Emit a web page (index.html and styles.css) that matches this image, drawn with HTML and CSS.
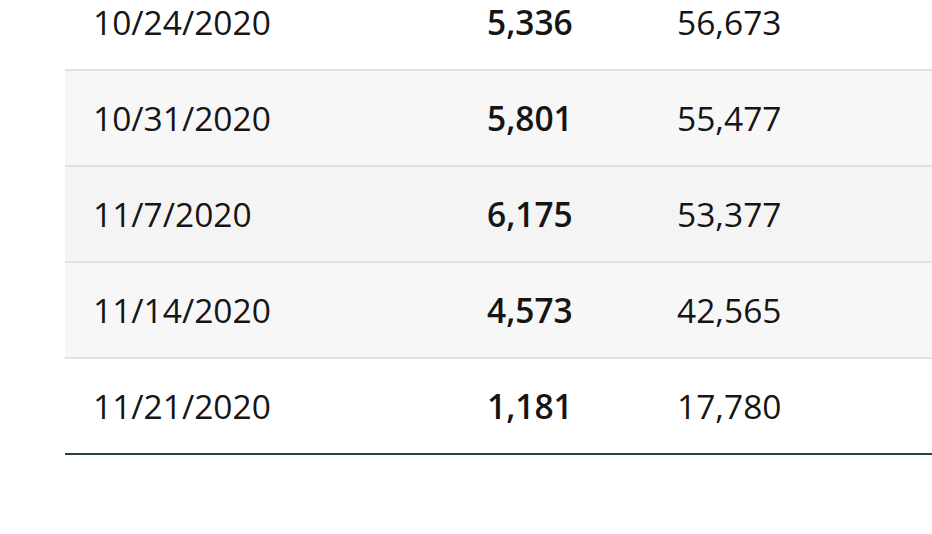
FILE: index.html
```html
<!DOCTYPE html>
<html lang="en">
<head>
<meta charset="utf-8">
<title>Weekly data</title>
<link rel="stylesheet" href="styles.css">
</head>
<body>
<div class="wrap">
  <table class="data">
    <tbody>
      <tr class="first"><td>10/24/2020</td><td class="num">5,336</td><td>56,673</td></tr>
      <tr class="shade"><td>10/31/2020</td><td class="num">5,801</td><td>55,477</td></tr>
      <tr class="shade dark"><td>11/7/2020</td><td class="num">6,175</td><td>53,377</td></tr>
      <tr class="shade"><td>11/14/2020</td><td class="num">4,573</td><td>42,565</td></tr>
      <tr class="last"><td>11/21/2020</td><td class="num">1,181</td><td>17,780</td></tr>
    </tbody>
  </table>
</div>
</body>
</html>
```

FILE: styles.css
```css
html, body {
  margin: 0;
  padding: 0;
  background: #ffffff;
  overflow: hidden;
}
body {
  font-family: "Open Sans", "Liberation Sans", sans-serif;
  color: #151515;
}
.wrap {
  padding-left: 65px;
  margin-top: -26px;
}
.data {
  width: 100%;
  border-collapse: collapse;
  font-size: 33.5px;
  line-height: 40px;
}
.data td {
  height: 96px;
  padding: 0 0 0 28px;
  border-bottom: 2px solid #e1e1e1;
  vertical-align: middle;
  white-space: nowrap;
  box-sizing: border-box;
}
.data td:nth-child(1) { width: 394px; }
.data td:nth-child(2) { width: 190px; }
.data .num { font-weight: 600; }
.data tr.shade td { background: #f7f7f7; }
.data tr.shade.dark td { background: #f4f4f4; }
.data tr.last td { border-bottom: 2px solid #2c4242; }
```
